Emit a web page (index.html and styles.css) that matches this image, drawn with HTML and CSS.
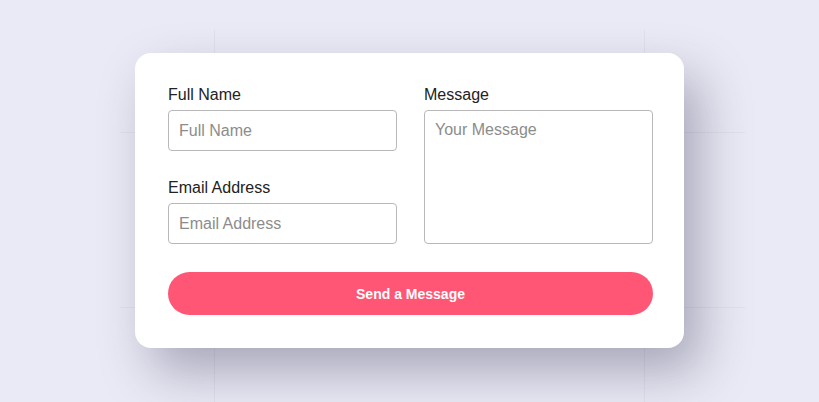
FILE: index.html
```html
<!DOCTYPE html>
<html lang="en">
<head>
<meta charset="utf-8">
<title>Contact</title>
<link rel="stylesheet" href="styles.css">
</head>
<body>
<main class="stage">
  <form class="card">
    <div class="fields">
      <div class="col">
        <label class="label" for="name">Full Name</label>
        <input class="input" id="name" type="text" placeholder="Full Name">
        <label class="label label-gap" for="email">Email Address</label>
        <input class="input" id="email" type="email" placeholder="Email Address">
      </div>
      <div class="col">
        <label class="label" for="msg">Message</label>
        <textarea class="input textarea" id="msg" placeholder="Your Message"></textarea>
      </div>
    </div>
    <button class="send" type="button">Send a Message</button>
  </form>
</main>
</body>
</html>
```
FILE: styles.css
```css
* { box-sizing: border-box; }
html, body { margin: 0; padding: 0; }
body {
  width: 819px;
  height: 402px;
  overflow: hidden;
  font-family: "Liberation Sans", Arial, sans-serif;
  background-color: #eaeaf6;
  background-image:
    linear-gradient(rgba(60,60,90,0.06), rgba(60,60,90,0.06)),
    linear-gradient(rgba(60,60,90,0.06), rgba(60,60,90,0.06)),
    linear-gradient(rgba(60,60,90,0.06), rgba(60,60,90,0.06)),
    linear-gradient(rgba(60,60,90,0.06), rgba(60,60,90,0.06));
  background-repeat: no-repeat;
  background-position: 214px 30px, 644px 30px, 120px 132px, 120px 307px;
  background-size: 1px 372px, 1px 372px, 625px 1px, 625px 1px;
}
.stage {
  height: 402px;
  display: flex;
  align-items: flex-start;
  justify-content: center;
  padding-top: 53px;
}
.card {
  width: 549px;
  background: #ffffff;
  border-radius: 16px;
  padding: 33px 31px 33px 33px;
  box-shadow: 16px 24px 50px rgba(50, 50, 80, 0.36);
  display: flex;
  flex-direction: column;
}
.fields {
  display: grid;
  grid-template-columns: 229px 229px;
  column-gap: 27px;
}
.col {
  display: flex;
  flex-direction: column;
}
.label {
  display: block;
  font-size: 16px;
  line-height: 18px;
  color: #222222;
  margin-bottom: 6px;
}
.label-gap { margin-top: 28px; }
.input {
  display: block;
  width: 100%;
  height: 41px;
  border: 1px solid #b8b8b8;
  border-radius: 4px;
  padding: 0 10px;
  font-family: "Liberation Sans", Arial, sans-serif;
  font-size: 16px;
  color: #222;
  background: #fff;
  outline: none;
}
.input::placeholder { color: #8c8c8c; }
.textarea {
  flex: 1;
  height: auto;
  resize: none;
  padding: 9px 10px;
  line-height: 20px;
}
.send {
  margin-top: 28px;
  height: 43px;
  border: none;
  border-radius: 22px;
  background: #ff5675;
  color: #ffffff;
  font-family: "Liberation Sans", Arial, sans-serif;
  font-weight: bold;
  font-size: 14px;
}
```
